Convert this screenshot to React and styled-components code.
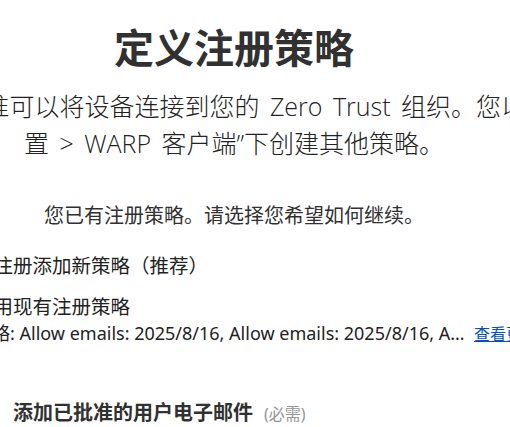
import React from 'react'
import styled, { createGlobalStyle } from 'styled-components'

const GlobalStyle = createGlobalStyle`
  html, body {
    margin: 0;
    padding: 0;
    background: #ffffff;
  }
  body {
    font-family: "Noto Sans", "Noto Sans CJK SC", sans-serif;
    color: #313131;
    overflow: hidden;
  }
`

const Viewport = styled.div`
  width: 510px;
  height: 427px;
  overflow: hidden;
`

const Sheet = styled.main`
  width: 588px;
  margin-left: -60px;
  padding-top: 20px;
  display: flex;
  flex-direction: column;
`

const Title = styled.h1`
  margin: 0;
  text-align: center;
  font-size: 40px;
  line-height: 56px;
  font-weight: 700;
  color: #313131;
`

const Lead = styled.div`
  margin-top: 12px;
  display: flex;
  flex-direction: column;
  align-items: center;
`

const LeadLine = styled.p`
  margin: 0;
  white-space: nowrap;
  font-family: "Open Sans", "Noto Sans CJK SC", sans-serif;
  font-size: 25px;
  line-height: 37px;
  font-weight: 300;
  word-spacing: 4px;
  color: #222;
`

const Notice = styled.p`
  margin: 40px 0 0;
  text-align: center;
  font-size: 20px;
  line-height: 28px;
  color: #313131;
`

const Options = styled.div`
  margin-top: 22px;
  padding-left: 8px;
  display: flex;
  flex-direction: column;
  gap: 13px;
`

const Option = styled.label`
  display: flex;
  align-items: center;
  gap: 10px;
  font-size: 19.5px;
  line-height: 28px;
  color: #222;
`

const Radio = styled.span`
  width: 16px;
  height: 16px;
  border-radius: 50%;
  box-sizing: border-box;
  border: ${p => (p.checked ? '5px solid #0051c3' : '1px solid #767676')};
  flex: none;
`

const PolicyRow = styled.div`
  display: flex;
  align-items: baseline;
  gap: 6px;
  margin-top: -14px;
  padding-left: 26px;
  line-height: 26px;
`

const PolicyText = styled.span`
  flex: none;
  max-width: 494px;
  white-space: nowrap;
  overflow: hidden;
  text-overflow: ellipsis;
  font-size: 18px;
  color: #222;
`

const MoreLink = styled.a`
  flex: none;
  color: #0051c3;
  text-decoration: underline;
  white-space: nowrap;
  font-size: 16px;
`

const Section = styled.section`
  margin-top: 52px;
  padding-left: 73px;
  display: flex;
  align-items: baseline;
  gap: 11px;
`

const SectionTitle = styled.h2`
  margin: 0;
  font-size: 20px;
  line-height: 28px;
  font-weight: 700;
  color: #313131;
`

const Hint = styled.span`
  font-size: 16px;
  color: #959595;
`

export default function App() {
  return (
    <>
      <GlobalStyle />
      <Viewport>
        <Sheet>
          <Title>定义注册策略</Title>
          <Lead>
            <LeadLine>定义哪些用户获准可以将设备连接到您的 Zero Trust 组织。您以后可以在“设</LeadLine>
            <LeadLine>置 &gt; WARP 客户端”下创建其他策略。</LeadLine>
          </Lead>
          <Notice>您已有注册策略。请选择您希望如何继续。</Notice>
          <Options>
            <Option>
              <Radio />
              为注册添加新策略（推荐）
            </Option>
            <Option>
              <Radio checked />
              使用现有注册策略
            </Option>
            <PolicyRow>
              <PolicyText>
                策略: Allow emails: 2025/8/16, Allow emails: 2025/8/16, Allow emails: 2025/8/16
              </PolicyText>
              <MoreLink href="#">查看更多</MoreLink>
            </PolicyRow>
          </Options>
          <Section>
            <SectionTitle>添加已批准的用户电子邮件</SectionTitle>
            <Hint>(必需)</Hint>
          </Section>
        </Sheet>
      </Viewport>
    </>
  )
}
